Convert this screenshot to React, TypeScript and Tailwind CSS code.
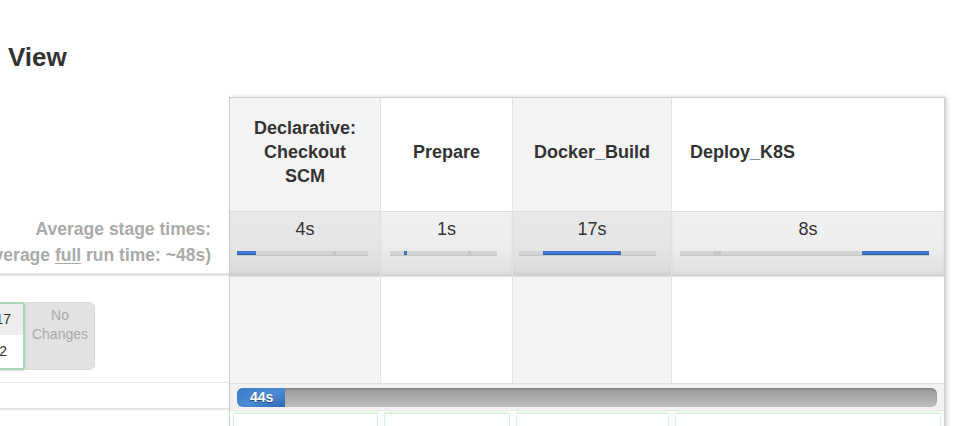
const cols = "grid grid-cols-[151px_132px_159px_272px]";

const stages = [
  { name: "Declarative:\nCheckout\nSCM", time: "4s", left: 0, width: 19, ticks: [96], align: "center" },
  { name: "Prepare", time: "1s", left: 14, width: 3, ticks: [78], align: "center" },
  { name: "Docker_Build", time: "17s", left: 24, width: 78, ticks: [], align: "center" },
  { name: "Deploy_K8S", time: "8s", left: 182, width: 67, ticks: [34, 38], align: "left" },
];

const barSpans = ["mr-[12px]", "mr-[15px]", "mr-[15px]", "mr-[15px]"];
const barLeft = ["ml-[7px]", "ml-[9px]", "ml-[6px]", "ml-[8px]"];

function MiniBar({ i }: { i: number }) {
  const s = stages[i];
  return (
    <div className={`relative h-[5px] mt-[11px] ${barLeft[i]} ${barSpans[i]} bg-[#d3d3d3] border-b border-[#c6c6c6]`}>
      {s.ticks.map((t) => (
        <div key={t} className="absolute top-0 h-full w-[3px] bg-[#c4c4c4]" style={{ left: t }} />
      ))}
      <div
        className="absolute top-0 h-full bg-[#3f78c9] border-b border-[#2f62ad]"
        style={{ left: s.left, width: s.width }}
      />
    </div>
  );
}

export default function App() {
  const shade = (i: number) => (i % 2 === 0 ? "bg-[#f4f4f4]" : "bg-white");
  const statShade = (i: number) =>
    i % 2 === 0
      ? "bg-gradient-to-b from-[#e8e8e8] via-[#e6e6e6] to-[#d9d9d9]"
      : "bg-gradient-to-b from-[#f0f0f0] via-[#eeeeee] to-[#e0e0e0]";
  const sep = (i: number) => (i < 3 ? "border-r border-[#e2e2e2]" : "");

  return (
    <div className="w-[965px] h-[426px] overflow-hidden bg-white text-[#333]" style={{ fontFamily: '"Liberation Sans", Arial, sans-serif' }}>
      {/* Title */}
      <div className="h-[97px] pl-[8px] pt-[41px]">
        <h1 className="text-[26px] leading-[32px] font-bold text-[#333]">View</h1>
      </div>

      <div className="flex">
        {/* Left panel */}
        <div className="w-[229px] flex flex-col overflow-hidden">
          <div className="h-[114px]" />
          <div className="h-[65px] flex flex-col justify-center items-end pr-[18px] border-b-[3px] border-[#e4e4e4] text-[#aaa] font-bold text-[17.5px] leading-[26px] whitespace-nowrap">
            <div>Average stage times:</div>
            <div className="flex justify-end w-full">
              <span className="shrink-0">
                (Average <span className="underline underline-offset-2">full</span> run time: ~48s)
              </span>
            </div>
          </div>
          <div className="h-[107px] border-b border-[#e8e8e8] pt-[26px]">
            <div className="flex">
              <div className="-ml-[40px] w-[65px] h-[68px] border-2 border-[#a9d6b9] rounded-r-[3px] bg-white flex flex-col text-[14px] shadow-[1px_1px_2px_rgba(0,0,0,0.15)]">
                <div className="h-[31px] bg-[#eeeeee] flex items-center justify-end pr-[12px]">#17</div>
                <div className="flex-1 flex items-center justify-end pr-[16px]">12:32</div>
              </div>
              <div className="w-[70px] h-[68px] bg-[#e2e2e2] rounded-r-[6px] border border-[#d6d6d6] flex flex-col items-center pt-[3px] text-[14px] leading-[19px] text-[#aaa]">
                <div>No</div>
                <div>Changes</div>
              </div>
            </div>
          </div>
          <div className="h-[27px] border-b-[2px] border-[#e4e4e4]" />
          <div className="flex-1 h-[40px]" />
        </div>

        {/* Stage table */}
        <div className="w-[716px] border-l border-t border-r border-[#cfcfcf] shadow-[2px_0_4px_rgba(0,0,0,0.18)]">
          {/* Header */}
          <div className={`${cols} h-[113px]`}>
            {stages.map((s, i) => (
              <div
                key={s.name}
                className={`${shade(i)} ${sep(i)} flex items-center ${s.align === "center" ? "justify-center text-center" : "justify-start pl-[18px]"} font-bold text-[18px] leading-[24px] whitespace-pre-line pb-[5px]`}
              >
                {s.name}
              </div>
            ))}
          </div>

          {/* Average times */}
          <div className={`${cols} h-[65px] border-t border-[#dcdcdc]`}>
            {stages.map((s, i) => (
              <div key={s.name} className={`${statShade(i)} ${sep(i)} pt-[6px] shadow-[inset_0_-3px_3px_rgba(0,0,0,0.05)]`}>
                <div className="text-center text-[18px] leading-[22px] text-[#333]">{s.time}</div>
                <MiniBar i={i} />
              </div>
            ))}
          </div>

          {/* Build row */}
          <div className={`${cols} h-[107px] border-t border-[#e0e0e0]`}>
            {stages.map((s, i) => (
              <div key={s.name} className={`${shade(i)} ${sep(i)}`} />
            ))}
          </div>

          {/* Total run bar */}
          <div className="h-[27px] bg-[#f2f2f2] border-t border-[#e0e0e0] px-[7px] pt-[4px]">
            <div className="relative h-[19px] rounded-[6px] bg-gradient-to-b from-[#979797] via-[#ababab] to-[#bdbdbd] overflow-hidden shadow-[inset_0_1px_2px_rgba(0,0,0,0.2)]">
              <div className="absolute left-0 top-0 h-full w-[48px] bg-gradient-to-br from-[#3b79c4] via-[#4b8bd6] to-[#2f6ab4] flex items-center pl-[13px] text-white font-bold text-[14px] [text-shadow:0_1px_1px_rgba(0,0,0,0.45)]">
                44s
              </div>
            </div>
          </div>

          {/* Next row start */}
          <div className={`${cols} h-[20px] border-t border-[#e6e6e6]`}>
            {stages.map((s, i) => (
              <div key={s.name} className="bg-white border-t-[2px] border-x border-[#dcf2dc] mx-[3px] mt-[1px]" />
            ))}
          </div>
        </div>
      </div>
    </div>
  );
}
